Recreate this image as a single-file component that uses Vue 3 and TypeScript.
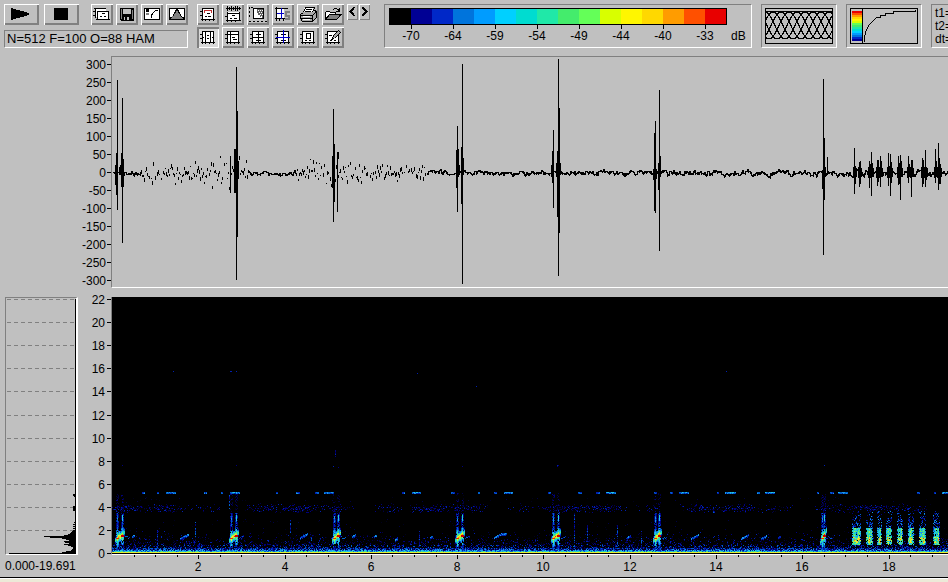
<script setup lang="ts">
interface Shape { d: string; fill?: string; stroke?: string }
interface Tool { name: string; shapes: Shape[]; pressed?: boolean }

const K = '#000'
const W = '#fff'
const G = '#808080'

const frame: Shape[] = [
  { d: 'M5 4H17V15H5Z', fill: W },
  { d: 'M5.5 4V17M16.5 4V16M5 4.5H17M4 15.5H18M3 7.5H5M3 11.5H5M8.5 15V17M12.5 15V17M16.5 15V17', stroke: K },
]
const trace: Shape = { d: 'M10 9.5H13M8 12.5H10M11 12.5H14', stroke: K }

const fileTools: Tool[] = [
  { name: 'Copy', shapes: [
    { d: 'M4 4H15V13H4Z', fill: W },
    { d: 'M3 4.5H15M4.5 4V14M2 7.5H4M2 11.5H4', stroke: K },
    { d: 'M7 7H18V15H7Z', fill: W },
    { d: 'M6 7.5H18M6.5 7V16M17.5 7V16M5 15.5H19M11 9.5H14M9 12.5H11M13 12.5H15', stroke: K },
  ] },
  { name: 'Save', shapes: [
    { d: 'M4 4H18V17H5L4 16Z', fill: K },
    { d: 'M7 5H15V10H7Z', fill: '#c0c0c0' },
    { d: 'M5 5H6V15H5ZM16 6H17V15H16Z', fill: G },
    { d: 'M8 13H13V16H8Z', fill: '#c0c0c0' },
    { d: 'M9 13H11V16H9Z', fill: K },
  ] },
  { name: 'Gain curve', shapes: [
    { d: 'M3 4H19V16H3Z', fill: W },
    { d: 'M3.5 4V16M18.5 4V16M3 4.5H19M3 15.5H19', stroke: K },
    { d: 'M5 5H8V8H5Z', fill: K },
    { d: 'M5 9H8V11H5Z', fill: G },
    { d: 'M10.5 14V11L12.5 8.5L14.5 6.5H17', stroke: K },
  ] },
  { name: 'Window function', shapes: [
    { d: 'M3 4H19V16H3Z', fill: W },
    { d: 'M4 15L6 13L8 10L10 5H12L14 10L16 13L18 15Z', fill: G },
    { d: 'M3.5 4V16M18.5 4V16M3 4.5H19M3 15.5H19M4 14.5L6.5 12.5L8.5 9.5L10.5 5.5H11.5L13.5 9.5L15.5 12.5L18 14.5', stroke: K },
  ] },
]

const viewTools: Tool[] = [
  { name: 'Spectrogram', shapes: [...frame, { d: 'M7 6.5H15M7.5 6V9M14.5 6V9', stroke: '#c03030' }, trace] },
  { name: 'Waveform', shapes: [
    { d: 'M6 8H18V16H6Z', fill: W },
    { d: 'M4 4.5H19M5.5 2V7M7.5 3V6M9.5 2V7M11.5 3V6M13.5 2V7M15.5 2V7M17.5 3V6M5.5 8V18M17.5 8V17M5 9.5H18M3 12.5H5M4 16.5H19M9.5 16V18M13.5 16V18M10 11.5H13M8 14.5H10M12 14.5H15', stroke: K },
  ] },
  { name: 'Selection', shapes: [
    { d: 'M6 5H17V15H6Z', fill: W },
    { d: 'M10 5H17V15H15V13H13V11H11V9H10Z', fill: '#606060' },
    { d: 'M6.5 4V15M16.5 4V15M6 4.5H17M6 14.5H17M2.5 3V5M2.5 7V9M2.5 11V13M2 17.5H4M6 17.5H8M10 17.5H12M14 17.5H16M18 17.5H20M4 3.5H6', stroke: K },
    { d: 'M11 6.5H12M13 6.5H14M15 6.5H16M12 8.5H13M14 8.5H15M13 10.5H14M15 10.5H16M14 12.5H15', stroke: W },
  ] },
  { name: 'Synchronize', shapes: [
    { d: 'M4 5H12V15H4Z', fill: W },
    { d: 'M4.5 3V17M3 4.5H16M3 14.5H15M7.5 14V17M11.5 14V17', stroke: K },
    { d: 'M9.5 4V15M5 9.5H12', stroke: '#0000c8' },
    { d: 'M13 7H18V9H15V11H18V16H13V14H16V13H13Z', fill: G },
  ] },
  { name: 'Print', shapes: [
    { d: 'M8 3H17L15 9H6Z', fill: W },
    { d: 'M3 10L6 8H17L20 6V13L16 17H3Z', fill: '#a8a8a8' },
    { d: 'M8.5 3.5H17.5L15.5 8.5M8.5 3.5L6.5 8.5L3.5 10.5V14.5L5.5 17.5H15.5L19.5 13.5V7.5L17.5 6.5M3 11.5H15.5L19 8M15.5 12V17M4 14.5H15M9 5.5H15M8 7.5H14', stroke: K },
    { d: 'M6 12.5H13M6 15.5H13', stroke: W },
  ] },
  { name: 'Open', shapes: [
    { d: 'M3 8H8L9 9H14V11H8L3 16Z', fill: W },
    { d: 'M7 11H19L14 16H3Z', fill: G },
    { d: 'M3.5 16V8.5L4.5 7.5H7.5L8.5 8.5H13.5V11M3 15.5H14.5L19 10.5H7.5L3.5 15.5M11 5.5L12.5 4.5H14.5L17 6.5M17.5 4V7.5H14', stroke: K },
  ] },
  { name: 'Time cursor', pressed: true, shapes: [...frame, { d: 'M8.5 4V15M13.5 4V15M10 8.5H12M10 11.5H12M6 10.5H7M15 10.5H16', stroke: K }] },
  { name: 'Frequency cursor', shapes: [...frame, { d: 'M5 7.5H17M8.5 4V15M10 10.5H13M11 12.5H15', stroke: K }] },
  { name: 'Cross cursor', shapes: [...frame, { d: 'M5 10.5H17M11.5 4V15M9 7.5H14M9 13.5H14', stroke: K }] },
  { name: 'Linked cursor', shapes: [...frame, { d: 'M9 7.5H14M9 13.5H14', stroke: K }, { d: 'M4 10.5H18M11.5 3V16', stroke: '#0000c8' }] },
  { name: 'Box cursor', shapes: [...frame, { d: 'M9 6.5H14M9 11.5H14M9.5 6V12M13.5 6V12M8 13.5H10M12 13.5H14', stroke: K }] },
  { name: 'Draw', shapes: [...frame, { d: 'M7 8.5H10M8 13.5H10M12 13.5H14', stroke: K }, { d: 'M10 12L11 9L17 3L19 5L13 11Z', fill: '#a8a8a8' }, { d: 'M10 12.5L11.5 8.5L16.5 3.5L18.5 5.5L12.5 11.5Z', stroke: K }] },
]

const palette = ['#000', '#000094', '#0028c8', '#0074dc', '#009cff', '#00d0ff', '#00dcd0', '#20e8a8',
  '#44ec6c', '#64ff58', '#d8ff00', '#fff600', '#ffd800', '#ff9c00', '#ff5000', '#e80000']
const levels = ['-70', '-64', '-59', '-54', '-49', '-44', '-40', '-33']

/* Repeatable pseudo random numbers in 0..1 */
function makeRandom(seed: number) {
  let s = seed
  return () => {
    s = (s * 1664525 + 1013904223) % 4294967296
    return s / 4294967296
  }
}

/* Overlapping analysis windows */
const windows: string[] = []
for (let start = -36; start < 70; start += 8) {
  const pts: string[] = []
  for (let i = 0; i <= 40; i += 2) {
    pts.push(`${start + i},${(31 - 27 * Math.sin((Math.PI * i) / 40) ** 2).toFixed(1)}`)
  }
  windows.push(pts.join(' '))
}

/* Waveform, in plot pixels; zero line at 115 */
const strokes: number[][] = [
  [4, 96, 138], [5, 23, 153], [3, 108, 128], [10, 41, 186], [9, 96, 130], [11, 102, 130], [8, 108, 118], [7, 110, 118],
  [118, 99, 136], [122, 92, 136], [123, 92, 136], [124, 10, 223], [125, 54, 180], [126, 104, 118],
  [220, 99, 131], [221, 52, 165], [222, 87, 145], [225, 95, 155], [226, 95, 102],
  [344, 93, 131], [345, 69, 155], [346, 92, 120], [349, 90, 147], [350, 7, 227], [351, 101, 118], [347, 108, 118],
  [440, 94, 126], [441, 73, 151], [439, 108, 120], [445, 94, 160], [446, 2, 219], [447, 51, 176], [448, 106, 118], [444, 106, 120],
  [542, 76, 154], [543, 64, 156], [541, 112, 123], [544, 112, 122], [546, 106, 133], [547, 33, 194], [548, 99, 120],
  [710, 113, 132], [711, 22, 198], [712, 81, 143], [713, 110, 120], [715, 100, 118],
]
const pulses: number[][] = [[742, 91, 137], [747, 105, 130], [757, 104, 131], [759, 95, 139], [765, 103, 129], [768, 99, 130],
  [776, 96, 129], [778, 97, 139], [786, 99, 128], [788, 98, 143], [796, 99, 126], [799, 103, 140], [810, 101, 130],
  [813, 93, 130], [823, 92, 126], [826, 86, 133], [827, 101, 118]]

function noiseSize(x: number) {
  if (x < 12) return 3
  if (x < 30) return 6
  if (x < 100) return 12
  if (x < 136) return 18
  if (x < 165) return 3
  if (x < 185) return 7
  if (x < 255) return 15
  if (x < 315) return 10
  if (x < 480) return 5
  return 6
}

const rw = makeRandom(77)
let wave = ''
function bar(x: number, top: number, bottom: number) {
  wave += `M${x} ${top}h1V${bottom}h-1z`
}
let previous = 115
for (let x = 1; x < 850; x++) {
  const size = noiseSize(x)
  const c = Math.round(115 + (rw() + rw() - 1) * size)
  if (size < 8) {
    const next = Math.round((c + previous) / 2)
    bar(x, Math.min(previous, next), Math.max(previous, next) + 1 + (rw() > 0.6 ? 1 : 0))
    previous = next
  } else if (rw() > 0.12) {
    bar(x, c, c + 1 + Math.floor(rw() * 4))
  }
}
strokes.forEach(([x, t, b]) => bar(x, t, b))
pulses.forEach(([x, t, b]) => {
  bar(x, t, b)
  bar(x - 1, 110, 121)
  bar(x + 1, 103 + Math.floor(rw() * 8), 120 + Math.floor(rw() * 8))
  bar(x + 2, 111, 120)
})

const amplitudes = Array.from({ length: 13 }, (_, i) => ({ label: String(300 - i * 50), y: 8 + i * 18 }))
const frequencies = Array.from({ length: 12 }, (_, i) => ({ label: String(22 - i * 2), y: Math.round(2 + i * 23.1) }))
const seconds = Array.from({ length: 39 }, (_, i) => ({
  x: Math.round(1 + (i + 1) * 21.57),
  label: (i + 1) % 4 === 0 ? String((i + 1) / 2) : '',
}))

/* Spectrogram, one path per colour */
const shades = ['#00001c', '#000044', '#00007c', '#0020b0', '#0060cc', '#1898e8', '#20c8e8', '#20d8b8', '#50e880',
  '#a0f050', '#e8f030', '#ffd010', '#ff8c00', '#e82800', '#c80000']
const cells = new Map<number, number>()
const rs = makeRandom(4242)
function put(x: number, y: number, v: number) {
  const level = Math.min(14, Math.floor(v))
  if (level < 0 || x < 0 || x > 849 || y < 0 || y > 256) return
  const key = Math.round(y) * 1000 + Math.round(x)
  if (level > (cells.get(key) ?? -1)) cells.set(key, level)
}
for (let x = 0; x < 850; x++) {
  for (let y = 234; y < 251; y++) {
    const p = (y - 232) / 28
    if (rs() < p * p) put(x, y, rs() * 3.6 + (y > 247 ? 1 : 0))
  }
  put(x, 251, rs() * 5)
  put(x, 252, rs() * 6)
  put(x, 253, 2 + rs() * 5)
  put(x, 254, 4 + rs() * 5)
  put(x, 255, 10)
  const crowd = 0.35 + 0.3 * Math.sin(x / 23) + 0.2 * Math.sin(x / 7)
  for (let n = 0; n < 4; n++) {
    if (rs() < crowd) put(x, 207 + Math.floor((rs() + rs()) * 4.5), 0.6 + rs() * 3)
  }
  if (rs() < 0.08) put(x, 200 + Math.floor(rs() * 8), rs() * 2)
  if (rs() < 0.14) put(x, 222 + Math.floor(rs() * 20), rs() * 2)
}

const dashes: number[][] = [[30, 3], [45, 2], [54, 10], [92, 3], [109, 2], [118, 10], [164, 2], [184, 4], [203, 4], [212, 10],
  [290, 3], [300, 9], [339, 4], [366, 2], [382, 3], [392, 9], [436, 3], [466, 4], [484, 4], [494, 10], [542, 3], [558, 3],
  [567, 10], [605, 2], [613, 11], [645, 3], [653, 10], [705, 2], [718, 4], [726, 10], [805, 3], [822, 2], [830, 18]]
dashes.forEach(([x, w]) => {
  for (let i = 0; i < w; i++) {
    put(x + i, 195, w > 4 ? 4 + rs() * 2.5 : 3 + rs() * 2)
    put(x + i, 196, 3 + rs() * 2.5)
  }
})

const clicks: number[][] = [[5, 10], [119, 124], [222, 226], [345, 350], [441, 446], [543, 547], [710, 712]]
clicks.forEach(([a, b]) => {
  for (let y = 196; y < 255; y++) {
    for (const x of [a, b]) {
      const near = Math.abs(y - (x === a ? 241 : 239))
      const fade = y < 216 ? 2 : near < 9 ? 10 - near * 0.5 : 4
      for (let d = -1; d <= 1; d++) {
        const keep = y < 216 ? 0.3 : 0.75
        if (rs() < keep) put(x + d, y, (fade + rs() * 2 - 1) * (d ? 0.7 : 1))
      }
    }
  }
  for (let y = 218; y < 224; y++) {
    put(b, y, 6 + rs() * 2)
    put(a, y + 1, 4 + rs() * 2)
  }
  for (let x = a - 2; x <= b + 2; x++) {
    const mid = 241 - ((x - a) * 4) / (b - a)
    for (let d = -5; d <= 5; d++) put(x, Math.round(mid + d), 13.5 - Math.abs(d) * 1.6 - rs() * 2.5 - (x < a || x > b ? 4 : 0))
  }
  for (let i = 0; i < 3; i++) {
    put(b - i + 1, 238, 14)
    put(b - i + 1, 239, 14)
    put(a - 1 + i, 241, 13)
  }
  for (let i = 3; i < 8; i++) put(b + i, 239 + Math.floor(rs() * 3), 3 + rs() * 2)
  put(b, 168 + Math.floor(rs() * 3), 2)
})

const bursts: number[][] = [[740, 749], [754, 761], [765, 770], [774, 780], [785, 791], [796, 802], [807, 814], [821, 828]]
bursts.forEach(([a, b]) => {
  for (let x = a; x < b; x++) {
    const side = x === a || x === b - 1
    const bright = rs() * 2
    for (let y = 214; y < 248; y++) {
      if (y < 231) {
        if (rs() < (y - 208) / 44) put(x, y, 2 + rs() * 3.5)
      } else if (rs() < (side ? 0.65 : 0.95)) {
        const hot = y > 239 && y < 246 ? 4 : 1
        put(x, y, (side ? 2 : 4) + bright + rs() * 4 + rs() * hot)
      }
    }
  }
})

const chirps: number[][] = [[20, 239, 3], [68, 241, 9], [188, 240, 8], [240, 239, 4], [318, 240, 3], [382, 240, 13], [515, 240, 4],
  [283, 242, 3], [579, 241, 8], [629, 241, 8], [649, 241, 6], [666, 240, 3], [262, 239, 3]]
chirps.forEach(([x, y, w]) => {
  for (let i = 0; i < w; i++) {
    const cy = y - Math.min(4, Math.round(i / 2))
    put(x + i, cy, 3 + rs() * 3)
    put(x + i, cy + 1, 3 + rs() * 3)
    put(x + i, cy + 2, rs() * 4)
  }
})

const lines: number[][] = [[45, 233, 252], [83, 225, 244], [178, 223, 236], [199, 240, 253], [206, 245, 253], [462, 216, 252],
  [475, 228, 248], [505, 228, 250], [529, 234, 250], [307, 234, 250], [223, 153, 160], [117, 198, 212], [601, 208, 216], [445, 167, 170]]
lines.forEach(([x, a, b]) => {
  for (let y = a; y < b; y++) if (rs() < 0.8) put(x, y, 1.5 + rs() * 3.5)
})
const specks: number[][] = [[61, 74], [118, 74], [119, 74], [124, 74], [305, 76], [614, 74], [364, 89], [221, 169], [712, 168]]
specks.forEach(([x, y]) => put(x, y, 3))

const layers = shades.map(() => '')
cells.forEach((level, key) => {
  layers[level] += `M${key % 1000} ${Math.floor(key / 1000)}h1v1h-1z`
})

/* Average spectrum: [row, left edge] */
const rows: number[][] = [[196, 67], [197, 67], [198, 68], [208, 67], [209, 67], [210, 67], [211, 67], [212, 67],
  [224, 68], [226, 67], [228, 67], [230, 67], [232, 67], [233, 66], [234, 65], [235, 64], [236, 62], [237, 58], [238, 38], [239, 44],
  [240, 56], [241, 60], [242, 63], [243, 58], [244, 59], [245, 63], [246, 58], [247, 62], [248, 65], [249, 67], [250, 67],
  [251, 66], [252, 65], [253, 60], [254, 56], [255, 3]]
const spectrum = rows.map(([y, x]) => `M${x} ${y}H70v1H${x}z`).join('')
</script>

<template>
  <main class="app">
    <header class="toolbar">
      <div class="group">
        <div class="row">
          <button class="btn wide" aria-label="Play">
            <svg width="35" height="21" aria-hidden="true"><path d="M7 4L25 9V11L7 16Z" /></svg>
          </button>
          <button class="btn wide stop" aria-label="Stop">
            <svg width="35" height="21" aria-hidden="true"><path d="M10 4H24V16H10Z" /></svg>
          </button>
          <div class="row tight">
            <button v-for="t in fileTools" :key="t.name" class="btn" :aria-label="t.name">
              <svg width="22" height="21" aria-hidden="true">
                <path v-for="(s, i) in t.shapes" :key="i" :d="s.d" :fill="s.fill ?? 'none'" :stroke="s.stroke ?? 'none'" />
              </svg>
            </button>
          </div>
        </div>
        <output class="params">N=512 F=100 O=88 HAM</output>
      </div>

      <div class="views">
        <button v-for="t in viewTools" :key="t.name" class="btn" :class="{ pressed: t.pressed }" :aria-label="t.name">
          <svg width="22" height="21" aria-hidden="true">
            <path v-for="(s, i) in t.shapes" :key="i" :d="s.d" :fill="s.fill ?? 'none'" :stroke="s.stroke ?? 'none'" />
          </svg>
        </button>
      </div>
      <div class="steps">
        <button class="btn small" aria-label="Previous">
          <svg width="11" height="16" aria-hidden="true"><path d="M7.5 3L3.5 7.5L7.5 12" class="chevron" /></svg>
        </button>
        <button class="btn small" aria-label="Next">
          <svg width="11" height="16" aria-hidden="true"><path d="M3.5 3L7.5 7.5L3.5 12" class="chevron" /></svg>
        </button>
      </div>

      <section class="panel scale">
        <div class="colours">
          <i v-for="c in palette" :key="c" :style="{ background: c }"></i>
        </div>
        <div class="levels">
          <span v-for="l in levels" :key="l">{{ l }}</span>
          <b>dB</b>
        </div>
      </section>

      <section class="panel preview">
        <svg width="68" height="36" role="img" aria-label="Window overlap">
          <polyline v-for="(p, i) in windows" :key="i" :points="p" class="thin" />
          <path d="M0 3.5H68M.5 .5H67.5V35.5H.5Z" class="thin" />
        </svg>
      </section>

      <section class="panel preview gamma">
        <svg width="68" height="36" role="img" aria-label="Gain curve">
          <rect v-for="i in 15" :key="i" x="2" :y="i * 2 + 1" width="10" height="2" :fill="palette[16 - i]" />
          <path d="M.5 .5H67.5V35.5H.5ZM12.5 0V36" class="thin" />
          <path d="M14.5 34V29.5L15.5 24.5L17.5 19.5L19.5 16.5L23.5 12.5L26.5 9.5H30.5V7.5H35.5V5.5H43.5V3.5H65.5V2" class="thin" />
        </svg>
      </section>

      <section class="panel times">
        <div>t1=</div>
        <div>t2=</div>
        <div>dt=</div>
      </section>
    </header>

    <div class="plots">
      <svg class="axis amp" width="33" height="232" aria-label="Amplitude">
        <g v-for="a in amplitudes" :key="a.label">
          <text x="28" :y="a.y + 5" text-anchor="end">{{ a.label }}</text>
          <rect x="29" :y="a.y" width="4" height="1" />
        </g>
      </svg>
      <div class="wave">
        <svg width="100%" height="230" role="img" aria-label="Waveform"><path :d="wave" /></svg>
      </div>

      <div class="panel spectrum">
        <svg width="71" height="256" role="img" aria-label="Average spectrum">
          <path v-for="f in frequencies.slice(0, 11)" :key="f.label" :d="`M1 ${f.y - 1}.5H69`" class="dash" />
          <path d="M69 1h1V256h-1z" />
          <path :d="spectrum" />
        </svg>
      </div>
      <svg class="axis freq" width="33" height="258" aria-label="Frequency">
        <g v-for="f in frequencies" :key="f.label">
          <text x="27" :y="f.y + 5" text-anchor="end">{{ f.label }}</text>
          <rect x="29" :y="f.y" width="4" height="1" />
        </g>
      </svg>
      <div class="sonogram">
        <svg width="100%" height="257" role="img" aria-label="Spectrogram">
          <path v-for="(d, i) in layers" :key="i" :d="d" :fill="shades[i]" />
        </svg>
      </div>

      <div class="range">0.000-19.691</div>
      <svg class="axis time" width="100%" height="20" aria-label="Time">
        <g v-for="s in seconds" :key="s.x">
          <rect :x="s.x" y="0" width="1" :height="s.label ? 4 : 2" />
          <text v-if="s.label" :x="s.x" y="16" text-anchor="middle">{{ s.label }}</text>
        </g>
      </svg>
    </div>
    <footer class="edge"></footer>
  </main>
</template>

<style>
body {
  background: #ece9d8;
}
</style>

<style scoped>
.app {
  display: flex;
  flex-direction: column;
  overflow: hidden;
  background: #c0c0c0;
  color: #000;
  font: 12px/14px "Liberation Sans", Arial, sans-serif;
}
svg {
  display: block;
  shape-rendering: crispEdges;
}
.toolbar {
  display: flex;
  align-items: flex-start;
  padding: 4px 0 8px 4px;
}
.toolbar > * {
  flex: none;
}
.group {
  display: flex;
  flex-direction: column;
  gap: 5px;
}
.row {
  display: flex;
  gap: 5px;
}
.tight {
  gap: 3px;
}
.stop {
  margin-right: 7px;
}
.btn {
  width: 22px;
  height: 21px;
  padding: 0;
  border: 0;
  background: #c0c0c0;
  box-shadow: inset 1px 1px #fff, inset -2px -2px #808080;
}
.btn.wide {
  width: 35px;
}
.btn.small {
  width: 11px;
  height: 16px;
  box-shadow: inset 1px 1px #fff, inset -1px -1px #808080;
}
.btn.pressed {
  background: #d8d8d8;
  box-shadow: inset 2px 2px #808080, inset -1px -1px #fff;
}
.chevron {
  fill: none;
  stroke: #000;
  stroke-width: 2;
}
.params {
  box-sizing: border-box;
  height: 18px;
  padding: 0 2px;
  border: 1px solid;
  border-color: #808080 #fff #fff #808080;
  font-size: 13px;
  line-height: 16px;
}
.views {
  display: grid;
  grid-template-columns: repeat(6, 22px);
  gap: 2px 3px;
  margin-left: 9px;
}
.steps {
  display: flex;
  gap: 1px;
  margin-left: 3px;
}
.panel {
  box-sizing: border-box;
  border: 1px solid;
  border-color: #808080 #fff #fff #808080;
}
.scale {
  width: 368px;
  height: 44px;
  margin-left: 14px;
  padding: 3px 4px;
}
.colours {
  display: grid;
  grid-template-columns: repeat(16, 21px);
  width: 336px;
  height: 15px;
  border: 1px solid #000;
}
.levels {
  display: grid;
  grid-template-columns: repeat(8, 42px) 20px;
  padding-left: 1px;
}
.levels span {
  text-align: center;
}
.levels span::before {
  content: "";
  display: block;
  width: 1px;
  height: 4px;
  margin: 0 auto;
  background: #000;
}
.levels b {
  padding: 4px 0 0 5px;
  font-weight: normal;
}
.preview {
  height: 44px;
  margin-left: 9px;
  padding: 3px;
}
.thin {
  fill: none;
  stroke: #000;
}
.toolbar .times {
  flex: 1 1 0;
  min-width: 0;
  height: 44px;
  margin-left: 9px;
  padding: 2px 0 0 3px;
  overflow: hidden;
  border-right: 0;
  line-height: 13px;
  white-space: nowrap;
}
.plots {
  display: grid;
  grid-template-columns: 73px 33px minmax(0, 1fr);
  padding-left: 5px;
}
.axis {
  overflow: visible;
}
.amp {
  grid-column: 2;
}
.wave {
  margin-bottom: 9px;
  border: solid;
  border-width: 1px 0 1px 1px;
  border-color: #808080 #fff #fff #808080;
}
.spectrum {
  border-right-width: 2px;
}
.dash {
  stroke: #808080;
  stroke-dasharray: 4 3;
}
.sonogram {
  border-left: 1px solid #808080;
  border-bottom: 1px solid #fff;
  background: #000;
}
.range {
  padding-top: 4px;
  white-space: nowrap;
}
.time {
  grid-column: 3;
}
.edge {
  margin-top: 2px;
  height: 1px;
  border-bottom: 1px solid #fff;
  background: #000;
}
</style>
